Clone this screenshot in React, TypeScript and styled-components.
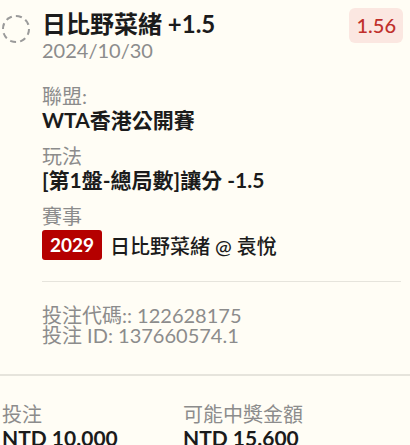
import React from "react";
import styled, { createGlobalStyle } from "styled-components";

const GlobalStyle = createGlobalStyle`
  html, body {
    margin: 0;
    padding: 0;
    background: #fffdf5;
  }
  body {
    font-family: Lato, "Noto Sans CJK TC", sans-serif;
    color: #1b1b1b;
  }
`;

const Card = styled.div`
  width: 410px;
  background: #fffdf5;
`;

const Top = styled.div`
  display: grid;
  grid-template-columns: 28px 1fr auto;
  grid-template-areas:
    "radio head odds"
    ". body body";
  column-gap: 12px;
  padding: 8px 7px 0 2px;
`;

const Radio = styled.span`
  grid-area: radio;
  box-sizing: border-box;
  width: 28px;
  height: 28px;
  margin-top: 7px;
  border-radius: 50%;
  border: 2px dashed #9a9a9a;
`;

const Head = styled.div`
  grid-area: head;
  padding-top: 2px;
`;

const Body = styled.div`
  grid-area: body;
  display: flex;
  flex-direction: column;
  padding-right: 2px;
`;

const Title = styled.div`
  font-size: 24px;
  line-height: 28px;
  font-weight: 700;
`;

const DateLine = styled.div`
  font-size: 20px;
  line-height: 24px;
  color: #8c8c8c;
`;

const Odds = styled.div`
  grid-area: odds;
  align-self: start;
  padding: 0 7px;
  height: 35px;
  line-height: 35px;
  border-radius: 6px;
  background: #fbe7e1;
  color: #c0302b;
  font-size: 20px;
  font-weight: 500;
`;

const Field = styled.div<{ $first?: boolean }>`
  margin-top: ${(p) => (p.$first ? "22px" : "12px")};
`;

const Label = styled.div`
  font-size: 20px;
  line-height: 24px;
  color: #8c8c8c;
`;

const Value = styled.div`
  font-size: 21px;
  line-height: 24px;
  font-weight: 700;
`;

const Match = styled.div`
  display: flex;
  align-items: center;
  gap: 8px;
  margin-top: 2px;
  font-size: 20px;
  font-weight: 500;
`;

const Code = styled.span`
  display: inline-block;
  width: 60px;
  height: 30px;
  line-height: 30px;
  text-align: center;
  border-radius: 3px;
  background: #b50000;
  color: #fff;
  font-weight: 700;
  font-size: 19px;
`;

const Divider = styled.hr`
  margin: 21px 0 0;
  border: none;
  border-top: 1px solid #e6e4dc;
`;

const Ids = styled.div`
  margin-top: 23px;
  font-size: 20px;
  line-height: 20px;
  color: #8c8c8c;
`;

const Footer = styled.div`
  margin-top: 29px;
  border-top: 2px solid #e6e4dc;
  display: grid;
  grid-template-columns: 181px 1fr;
  padding: 26px 0 0 2px;
`;

const Amount = styled.div`
  display: flex;
  flex-direction: column;
`;

export default function App() {
  return (
    <>
      <GlobalStyle />
      <Card>
        <Top>
          <Radio />
          <Head>
            <Title>日比野菜緒 +1.5</Title>
            <DateLine>2024/10/30</DateLine>
          </Head>
          <Odds>1.56</Odds>
          <Body>
            <Field $first>
              <Label>聯盟:</Label>
              <Value>WTA香港公開賽</Value>
            </Field>
            <Field>
              <Label>玩法</Label>
              <Value>[第1盤-總局數]讓分 -1.5</Value>
            </Field>
            <Field>
              <Label>賽事</Label>
              <Match>
                <Code>2029</Code>
                <span>日比野菜緒 @ 袁悅</span>
              </Match>
            </Field>
            <Divider />
            <Ids>
              <div>投注代碼:: 122628175</div>
              <div>投注 ID: 137660574.1</div>
            </Ids>
          </Body>
        </Top>
        <Footer>
          <Amount>
            <Label>投注</Label>
            <Value>NTD 10.000</Value>
          </Amount>
          <Amount>
            <Label>可能中獎金額</Label>
            <Value>NTD 15.600</Value>
          </Amount>
        </Footer>
      </Card>
    </>
  );
}
